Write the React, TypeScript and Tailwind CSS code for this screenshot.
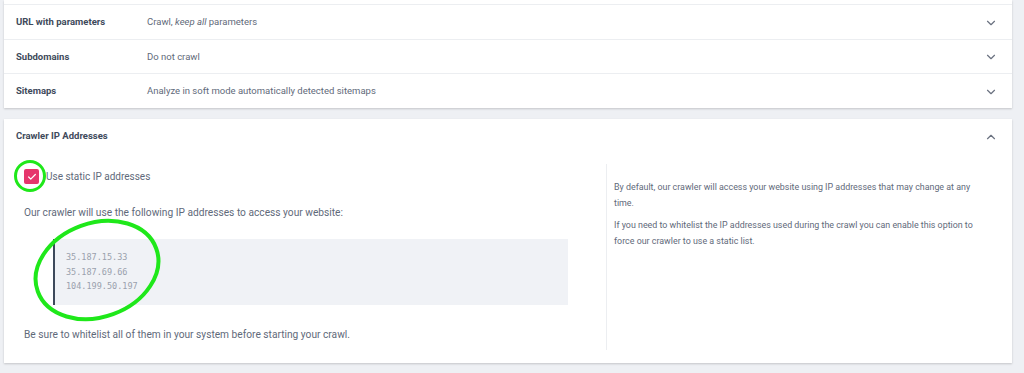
import { ChevronDown, ChevronUp, Check } from "lucide-react";

const rows = [
  { label: "URL with parameters", value: <>Crawl, <em>keep all</em> parameters</>, h: "h-[35px]" },
  { label: "Subdomains", value: <>Do not crawl</>, h: "h-[34px]" },
  { label: "Sitemaps", value: <>Analyze in soft mode automatically detected sitemaps</>, h: "h-[34px]" },
];

const ips = ["35.187.15.33", "35.187.69.66", "104.199.50.197"];

export default function App() {
  return (
    <div
      className="relative w-[1024px] h-[373px] overflow-hidden bg-[#eef0f4] pl-[4px] pr-[12px]"
      style={{ fontFamily: "Roboto, 'Liberation Sans', sans-serif" }}
    >
      {/* settings list */}
      <div className="bg-white shadow-[0_1px_2px_rgba(0,0,0,0.18)]">
        <div className="h-[5px] border-b border-[#eceef1]" />
        {rows.map((row, i) => (
          <div
            key={row.label}
            className={
              "flex items-center pl-[12px] pr-[14px] pt-[1px] " +
              row.h +
              (i < rows.length - 1 ? " border-b border-[#eceef1]" : "")
            }
          >
            <div className="w-[131px] text-[9.5px] font-bold text-[#3e4a5b]">{row.label}</div>
            <div className="flex-1 text-[9.5px] text-[#5f6a7a]">{row.value}</div>
            <ChevronDown className="w-[14px] h-[14px] text-[#6b7280]" strokeWidth={2} />
          </div>
        ))}
      </div>

      {/* crawler ip card */}
      <div className="mt-[11px] h-[244px] bg-white shadow-[0_1px_2px_rgba(0,0,0,0.18)] flex flex-col">
        <div className="flex items-center h-[33px] pl-[12px] pr-[14px] pt-[2px]">
          <div className="flex-1 text-[9.5px] font-bold text-[#3e4a5b]">Crawler IP Addresses</div>
          <ChevronUp className="w-[14px] h-[14px] text-[#6b7280]" strokeWidth={2} />
        </div>

        <div className="flex flex-1 pb-[13px] pt-[12px]">
          <div className="w-[602px] pl-[20px] pr-[38px] text-[#5f6a7a]">
            <label className="flex items-center gap-[7px] pt-[5px]">
              <span className="flex items-center justify-center w-[15px] h-[15px] rounded-[2px] bg-[#e6366c]">
                <Check className="w-[10px] h-[10px] text-white" strokeWidth={3} />
              </span>
              <span className="text-[10px] text-[#5f6a7a]">Use static IP addresses</span>
            </label>

            <p className="mt-[21px] text-[10.2px]">
              Our crawler will use the following IP addresses to access your website:
            </p>

            <div className="mt-[19px] ml-[29px] h-[66px] bg-[#f0f2f6] border-l-2 border-[#3e4a5b] pl-[11px] pt-[13px] flex flex-col gap-[3.5px]">
              {ips.map((ip) => (
                <span
                  key={ip}
                  className="text-[8.5px] leading-[11px] text-[#9aa1ad]"
                  style={{ fontFamily: "'DejaVu Sans Mono', monospace" }}
                >
                  {ip}
                </span>
              ))}
            </div>

            <p className="mt-[22px] text-[10.2px]">
              Be sure to whitelist all of them in your system before starting your crawl.
            </p>
          </div>

          <div className="flex-1 border-l border-[#eceef1] pl-[7px] pr-[30px] pt-[15px] text-[8.9px] leading-[16px] text-[#5f6a7a]">
            <p>
              By default, our crawler will access your website using IP addresses that may change at any time.
            </p>
            <p className="mt-[6px]">
              If you need to whitelist the IP addresses used during the crawl you can enable this option to force our crawler to use a static list.
            </p>
          </div>
        </div>
      </div>

      {/* annotation marks */}
      <svg className="absolute left-0 top-0 pointer-events-none" width="1024" height="373">
        <circle cx="30" cy="176" r="14.5" fill="none" stroke="#1fe81a" strokeWidth="3" />
        <ellipse
          cx="97"
          cy="270"
          rx="63"
          ry="47"
          fill="none"
          stroke="#1fe81a"
          strokeWidth="4"
          transform="rotate(-20 97 270)"
        />
      </svg>
    </div>
  );
}
